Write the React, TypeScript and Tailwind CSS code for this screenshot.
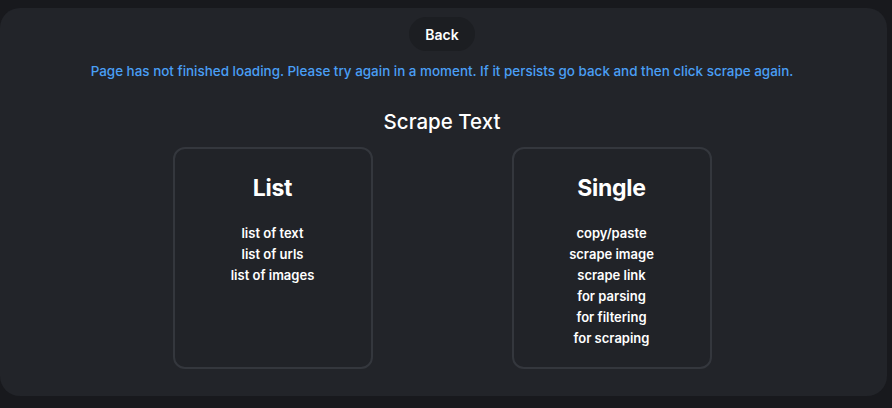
const lists = [
  { title: 'List', items: ['list of text', 'list of urls', 'list of images'] },
  {
    title: 'Single',
    items: ['copy/paste', 'scrape image', 'scrape link', 'for parsing', 'for filtering', 'for scraping'],
  },
];

const App = () => {
  return (
    <div className="w-[892px] h-[408px] bg-[#18191d] pt-2 pr-[5px] font-['Inter',sans-serif]">
      <div className="h-[388px] bg-[#222429] rounded-[20px] flex flex-col items-center pt-[9px] pr-[3px]">
        <button
          type="button"
          className="h-[34px] px-4 rounded-full bg-[#1c1e22] text-white text-[14px] font-semibold"
        >
          Back
        </button>

        <p className="mt-[12px] text-[13.45px] leading-4 font-medium text-[#4a9ff5]">
          Page has not finished loading. Please try again in a moment. If it persists go back and then click scrape again.
        </p>

        <h2 className="mt-[31px] text-[20.5px] leading-6 font-medium text-white">Scrape Text</h2>

        <div className="mt-[13px] flex gap-[139px]">
          {lists.map(card => (
            <div
              key={card.title}
              className="w-[200px] h-[222px] rounded-xl border-2 border-[#34373d] bg-[#212328] flex flex-col items-center pt-[25px]"
            >
              <h3 className="text-[23px] leading-7 font-bold text-white tracking-[-0.3px]">{card.title}</h3>
              <ul className="mt-[21px] flex flex-col items-center text-[13px] leading-[21px] font-semibold text-white">
                {card.items.map(item => (
                  <li key={item}>{item}</li>
                ))}
              </ul>
            </div>
          ))}
        </div>
      </div>
    </div>
  );
};

export default App;
